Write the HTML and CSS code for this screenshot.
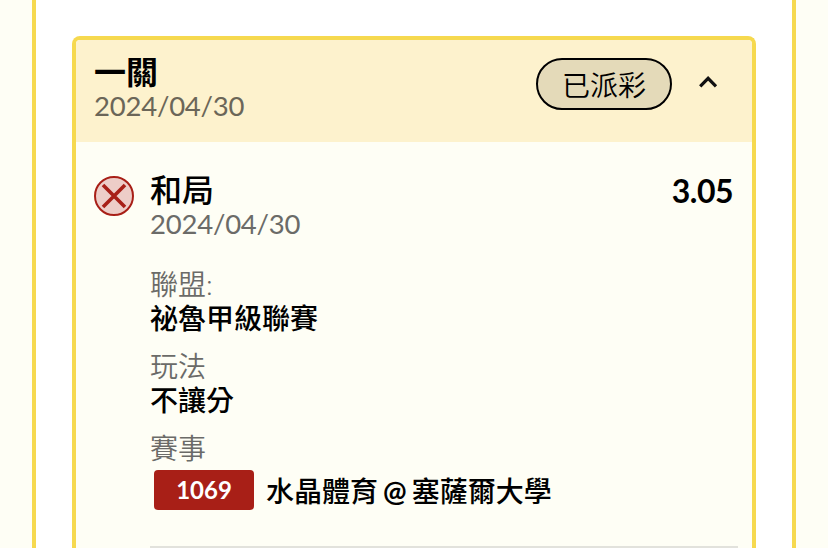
FILE: index.html
```html
<!DOCTYPE html>
<html lang="zh-Hant">
<head>
    <meta charset="UTF-8">
    <meta name="viewport" content="width=device-width, initial-scale=1.0">
    <title>一關</title>
    <link rel="stylesheet" href="styles.css">
</head>
<body>
    <main class="panel">
        <section class="card">
            <header class="card-header">
                <div class="heading">
                    <h2 class="title">一關</h2>
                    <p class="date">2024/04/30</p>
                </div>
                <span class="status">已派彩</span>
                <svg class="chevron" viewBox="0 0 20 14" width="20" height="14">
                    <path d="M2.2 11.4 L10.1 3.3 L18 11.4" fill="none" stroke="#111" stroke-width="3.2"/>
                </svg>
            </header>

            <div class="bet">
                <svg class="lost-icon" viewBox="0 0 40 40" width="40" height="40">
                    <circle cx="20" cy="20" r="19" fill="#edcdc8" stroke="#a81f17" stroke-width="2"/>
                    <path d="M9 9 L31 31 M31 9 L9 31" stroke="#a81f17" stroke-width="3.6"/>
                </svg>
                <div class="bet-content">
                    <div class="bet-top">
                        <div>
                            <h3 class="title">和局</h3>
                            <p class="date">2024/04/30</p>
                        </div>
                        <span class="odds">3.05</span>
                    </div>
                    <dl class="details">
                        <dt>聯盟:</dt>
                        <dd>祕魯甲級聯賽</dd>
                        <dt>玩法</dt>
                        <dd>不讓分</dd>
                        <dt>賽事</dt>
                        <dd class="match"><span class="code">1069</span><span class="teams">水晶體育 <span class="at">@</span> 塞薩爾大學</span></dd>
                    </dl>
                </div>
            </div>
        </section>
    </main>
</body>
</html>
```
FILE: styles.css
```css
* {
    box-sizing: border-box;
}

body {
    margin: 0;
    height: 100vh;
    overflow: hidden;
    background: #fefef5;
    color: #000;
    font-family: Lato, "Noto Sans CJK TC", sans-serif;
    font-size: 28px;
}

h2, h3, p, dl, dd {
    margin: 0;
}

/* White column */
.panel {
    height: 100vh;
    margin: 0 32px;
    padding: 36px 36px 0;
    background: #fff;
    border: solid #f6d94f;
    border-width: 0 4px;
}

.card {
    height: 100%;
    background: #fefef5;
    border: 4px solid #f6d94f;
    border-bottom: 0;
    border-radius: 8px 8px 0 0;
    overflow: hidden;
}

/* Card header */
.card-header {
    display: flex;
    align-items: flex-start;
    height: 102px;
    padding: 16px 34px 0 18px;
    background: #fdf2cd;
}

.heading {
    flex: 1;
}

.title {
    font-size: 32px;
    font-weight: 500;
    line-height: 32px;
}

.card-header .title {
    font-weight: 600;
}

.date {
    color: #6b6b68;
    font-size: 27.5px;
    letter-spacing: -0.22px;
    line-height: 36px;
}

.card-header .date {
    color: #6b6658;
}

.status {
    width: 136px;
    height: 52px;
    margin-top: 2px;
    background: #e4dab9;
    border: 2px solid #000;
    border-radius: 26px;
    line-height: 50px;
    text-align: center;
    font-weight: 350;
}

.chevron {
    margin: 19px 0 0 26px;
}

/* Bet */
.bet {
    display: flex;
    padding: 32px 14px 0 18px;
}

.lost-icon {
    margin: 2px 16px 0 0;
}

.bet-content {
    flex: 1;
    height: 374px;
    border-bottom: 2px solid #e2e2dc;
}

.bet-top {
    display: flex;
    justify-content: space-between;
    padding-right: 5px;
}

.odds {
    font-size: 32px;
    font-weight: 700;
    letter-spacing: -0.5px;
    line-height: 34px;
}

.details {
    padding-top: 25px;
}

.details dt {
    color: #6b6b68;
    font-weight: 350;
    line-height: 34px;
}

.details dd {
    margin-bottom: 14px;
    font-weight: 500;
    line-height: 34px;
}

.details .match {
    display: flex;
    align-items: center;
    margin: 5px 0 0 4px;
}

.code {
    width: 100px;
    height: 40px;
    margin-right: 12px;
    background: #a81f17;
    border-radius: 4px;
    color: #fff;
    font-size: 24px;
    font-weight: 700;
    line-height: 40px;
    text-align: center;
}

.teams {
    padding-top: 2px;
    word-spacing: -2px;
}

.at {
    font-weight: 700;
}
```
